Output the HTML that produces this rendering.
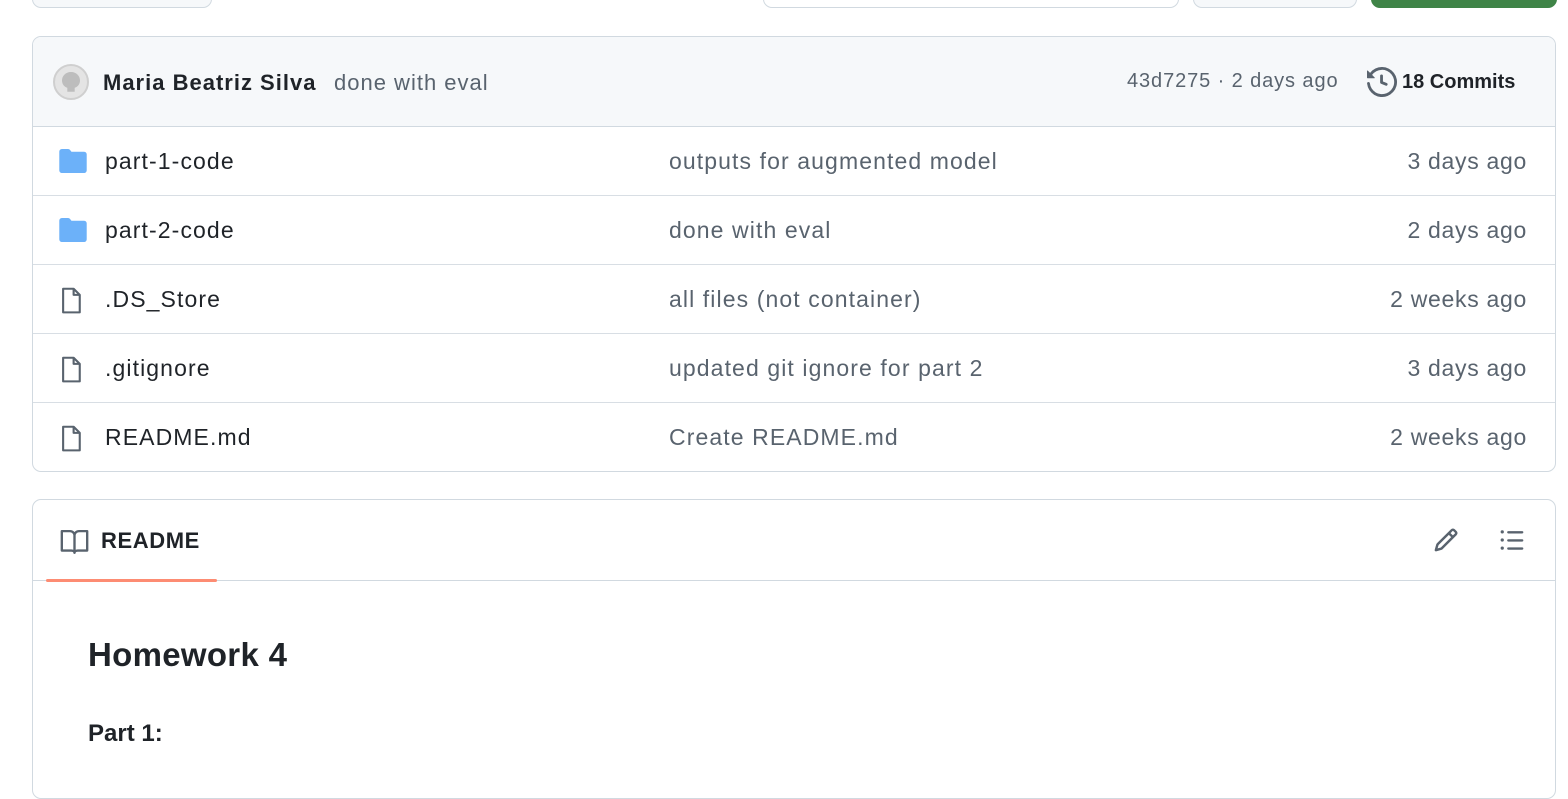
<!DOCTYPE html>
<html><head><style>
*{box-sizing:border-box;margin:0;padding:0}
body{width:1568px;height:768px;overflow:hidden;background:#fff;font-family:"Liberation Sans",sans-serif;color:#1f2328;position:relative}
.btn{position:absolute;top:-12px;height:20px;border:1px solid #d1d9e0;border-radius:9px;background:#f6f8fa}
.box{position:absolute;left:32px;width:1524px;border:1.5px solid #d1d9e0;border-radius:9px;overflow:hidden}
.hdr{height:90px;background:#f6f8fa;border-bottom:1.5px solid #d1d9e0;position:relative}
.row{height:69px;border-bottom:1.5px solid #d8dee4;position:relative;font-size:23px;letter-spacing:1.1px}
.row:last-child{border-bottom:none}
.row .n{position:absolute;left:72px;top:21px}
.row .m{position:absolute;left:636px;top:21px;color:#59636e}
.row .d{position:absolute;right:28px;top:21px;color:#59636e;letter-spacing:0.7px}
.row svg{position:absolute;left:26px;top:22px}
</style></head><body>
<div class="btn" style="left:32px;width:180px;background:#f6f8fa"></div>
<div class="btn" style="left:763px;width:416px;background:#fff"></div>
<div class="btn" style="left:1193px;width:164px"></div>
<div class="btn" style="left:1371px;width:186px;background:#3f8447;border-color:#3f8447"></div>

<div class="box" style="top:36px;height:436px">
 <div class="hdr">
  <svg style="position:absolute;left:20px;top:27px" width="36" height="36" viewBox="0 0 36 36"><circle cx="18" cy="18" r="17" fill="#e4e4e4" stroke="#cfcfcf" stroke-width="2"/><path d="M18 8c-5.5 0-9 4-9 8.5 0 3.5 2.2 6.3 5.3 7.3v4h7.4v-4c3.1-1 5.3-3.8 5.3-7.3C27 12 23.5 8 18 8z" fill="#bdbdbd"/></svg>
  <div style="position:absolute;left:70px;top:33px;font-size:22px;font-weight:bold;letter-spacing:1px">Maria Beatriz Silva</div>
  <div style="position:absolute;left:301px;top:33px;font-size:22px;color:#59636e;letter-spacing:1px">done with eval</div>
  <div style="position:absolute;left:1094px;top:33px;font-size:20px;color:#59636e;letter-spacing:0.9px">43d7275 · 2 days ago</div>
  <svg style="position:absolute;left:1334px;top:30px" width="30" height="30" viewBox="0 0 16 16" fill="#59636e"><path d="M1.643 3.143.427 1.927A.25.25 0 0 0 0 2.104V5.75c0 .138.112.25.25.25h3.646a.25.25 0 0 0 .177-.427L2.715 4.215a6.5 6.5 0 1 1-1.180 4.458.75.75 0 1 0-1.493.154 8.001 8.001 0 1 0 1.6-5.684ZM7.75 4a.75.75 0 0 1 .75.75v2.992l2.028.812a.75.75 0 0 1-.557 1.392l-2.5-1A.751.751 0 0 1 7 8.250v-3.5A.75.75 0 0 1 7.75 4Z"/></svg>
  <div style="position:absolute;left:1369px;top:34px;font-size:20px;font-weight:bold">18 Commits</div>
 </div>
 <div class="row"><svg width="28" height="24" viewBox="0 0 16 14"><path d="M0 1.5A1.5 1.5 0 0 1 1.5 0h3.6c.5 0 .9.2 1.2.6l.8 1h7.4A1.5 1.5 0 0 1 16 3.1v9.4a1.5 1.5 0 0 1-1.5 1.5h-13A1.5 1.5 0 0 1 0 12.5z" fill="#6cb1f9"/></svg><span class="n">part-1-code</span><span class="m">outputs for augmented model</span><span class="d">3 days ago</span></div>
 <div class="row"><svg width="28" height="24" viewBox="0 0 16 14"><path d="M0 1.5A1.5 1.5 0 0 1 1.5 0h3.6c.5 0 .9.2 1.2.6l.8 1h7.4A1.5 1.5 0 0 1 16 3.1v9.4a1.5 1.5 0 0 1-1.5 1.5h-13A1.5 1.5 0 0 1 0 12.5z" fill="#6cb1f9"/></svg><span class="n">part-2-code</span><span class="m">done with eval</span><span class="d">2 days ago</span></div>
 <div class="row"><svg width="24" height="28" viewBox="0 0 12 16"><path d="M1.5 1h6l3.5 3.5v10h-9.5z M7.5 1v3.5H11" fill="none" stroke="#59636e" stroke-width="1.2" stroke-linejoin="round"/></svg><span class="n">.DS_Store</span><span class="m">all files (not container)</span><span class="d">2 weeks ago</span></div>
 <div class="row"><svg width="24" height="28" viewBox="0 0 12 16"><path d="M1.5 1h6l3.5 3.5v10h-9.5z M7.5 1v3.5H11" fill="none" stroke="#59636e" stroke-width="1.2" stroke-linejoin="round"/></svg><span class="n">.gitignore</span><span class="m">updated git ignore for part 2</span><span class="d">3 days ago</span></div>
 <div class="row"><svg width="24" height="28" viewBox="0 0 12 16"><path d="M1.5 1h6l3.5 3.5v10h-9.5z M7.5 1v3.5H11" fill="none" stroke="#59636e" stroke-width="1.2" stroke-linejoin="round"/></svg><span class="n">README.md</span><span class="m">Create README.md</span><span class="d">2 weeks ago</span></div>
</div>

<div class="box" style="top:499px;height:300px">
 <div style="height:81px;border-bottom:1.5px solid #d1d9e0;position:relative">
  <svg style="position:absolute;left:27px;top:29px" width="29" height="26" viewBox="0 0 16 14" fill="none" stroke="#59636e" stroke-width="1.3" stroke-linejoin="round"><path d="M1 1h4.5c1.4 0 2.5 1 2.5 2.3V13c0-.8-.8-1.3-1.8-1.3H1z M15 1h-4.5C9.1 1 8 2 8 3.3V13c0-.8.8-1.3 1.8-1.3H15z"/></svg>
  <div style="position:absolute;left:68px;top:28px;font-size:22px;font-weight:bold;letter-spacing:0.6px">README</div>
  <div style="position:absolute;left:13px;bottom:-2px;width:171px;height:3px;background:#fd8c73;border-radius:2px"></div>
  <svg style="position:absolute;left:1400px;top:27px" width="26" height="26" viewBox="0 0 16 16" fill="#59636e"><path d="M11.013 1.427a1.75 1.75 0 0 1 2.474 0l1.086 1.086a1.75 1.75 0 0 1 0 2.474l-8.61 8.61c-.21.21-.47.364-.756.445l-3.251.93a.75.75 0 0 1-.927-.928l.929-3.25c.081-.286.235-.547.445-.758l8.61-8.61Zm.176 4.823L9.75 4.81l-6.286 6.287a.253.253 0 0 0-.064.108l-.558 1.953 1.953-.558a.253.253 0 0 0 .108-.064Zm1.238-3.763a.25.25 0 0 0-.354 0L10.811 3.75l1.439 1.44 1.263-1.263a.25.25 0 0 0 0-.354Z"/></svg>
  <svg style="position:absolute;left:1466px;top:27px" width="26" height="26" viewBox="0 0 16 16" fill="#59636e"><path d="M5.75 2.5h8.5a.75.75 0 0 1 0 1.5h-8.5a.75.75 0 0 1 0-1.5Zm0 5h8.5a.75.75 0 0 1 0 1.5h-8.5a.75.75 0 0 1 0-1.5Zm0 5h8.5a.75.75 0 0 1 0 1.5h-8.5a.75.75 0 0 1 0-1.5ZM2 14a1 1 0 1 1 0-2 1 1 0 0 1 0 2Zm1-6a1 1 0 1 1-2 0 1 1 0 0 1 2 0ZM2 4a1 1 0 1 1 0-2 1 1 0 0 1 0 2Z"/></svg>
 </div>
 <div style="position:absolute;left:55px;top:136px;font-size:33px;font-weight:bold;letter-spacing:0.3px">Homework 4</div>
 <div style="position:absolute;left:55px;top:220px;font-size:24px;font-weight:bold">Part 1:</div>
</div>
</body></html>
